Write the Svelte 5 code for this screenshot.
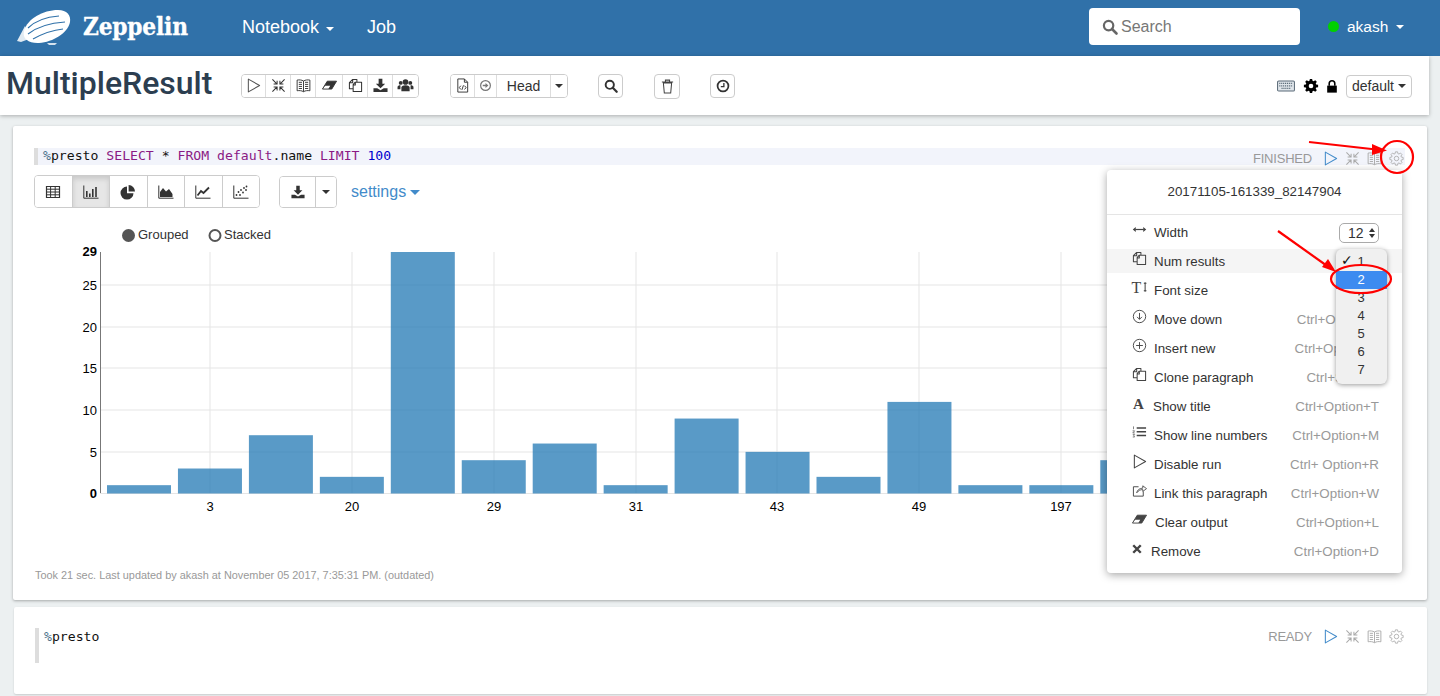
<script>
  function gearPath(c, R, r, n) {
    let d = '';
    const s = (Math.PI * 2) / n;
    for (let i = 0; i < n; i++) {
      const a = i * s;
      const pts = [
        [r, a - s * 0.36], [R, a - s * 0.2], [R, a + s * 0.2], [r, a + s * 0.36]
      ];
      pts.forEach(([q, t], j) => {
        d += (i === 0 && j === 0 ? 'M' : 'L') + (c + q * Math.cos(t)).toFixed(2) + ' ' + (c + q * Math.sin(t)).toFixed(2) + ' ';
      });
    }
    return d + 'Z';
  }
  const gear8 = gearPath(8, 7.2, 5.4, 8);

  const values = [1, 3, 7, 2, 29, 4, 6, 1, 9, 5, 2, 11, 1, 1, 4];
  const y0 = 493.5;
  const unit = 241.5 / 29;
  const bars = values.map((v, i) => ({ x: 107 + i * 70.95, h: v * unit }));
  const yTicks = [
    { v: 5, y: 452 }, { v: 10, y: 410 }, { v: 15, y: 368 }, { v: 20, y: 327 }, { v: 25, y: 285 }
  ];
  const xTicks = [
    { l: '3', x: 210 }, { l: '20', x: 352 }, { l: '29', x: 494 }, { l: '31', x: 636 },
    { l: '43', x: 777 }, { l: '49', x: 919 }, { l: '197', x: 1061 }
  ];
  const menu = [
    { icon: 'width', label: 'Width', key: '', cls: '' },
    { icon: 'copy', label: 'Num results', key: '', cls: 'hover' },
    { icon: 'font', label: 'Font size', key: '', cls: '' },
    { icon: 'down', label: 'Move down', key: 'Ctrl+Option+J', cls: '' },
    { icon: 'plus', label: 'Insert new', key: 'Ctrl+Option+B', cls: '' },
    { icon: 'copy', label: 'Clone paragraph', key: 'Ctrl+Shift+C', cls: '' },
    { icon: 'title', label: 'Show title', key: 'Ctrl+Option+T', cls: 'tight' },
    { icon: 'list', label: 'Show line numbers', key: 'Ctrl+Option+M', cls: '' },
    { icon: 'play', label: 'Disable run', key: 'Ctrl+ Option+R', cls: '' },
    { icon: 'link', label: 'Link this paragraph', key: 'Ctrl+Option+W', cls: '' },
    { icon: 'eraser', label: 'Clear output', key: 'Ctrl+Option+L', cls: 'wide' },
    { icon: 'remove', label: 'Remove', key: 'Ctrl+Option+D', cls: 'tighter' }
  ];
  const tools1 = ['play', 'collapse', 'book', 'eraser', 'copy', 'save', 'users'];
  const charts = ['table', 'bars', 'pie', 'area', 'line', 'scatter'];
  const options = ['1', '2', '3', '4', '5', '6', '7'];
</script>

{#snippet ic(name)}
  <svg class="ic" viewBox="0 0 16 16" aria-hidden="true">
    {#if name === 'play'}
      <path d="M2.5 1.2 14.5 8 2.5 14.8Z" fill="none" stroke="currentColor" stroke-width="1.1" stroke-linejoin="round" />
    {:else if name === 'collapse'}
      <path d="M1.5 1.5 6.2 6.2M6.5 2.8V6.5H2.8M14.5 1.5 9.8 6.2M9.5 2.8V6.5H13.2M1.5 14.5 6.2 9.8M6.5 13.2V9.5H2.8M14.5 14.5 9.8 9.8M9.5 13.2V9.5H13.2" fill="none" stroke="currentColor" stroke-width="1.1" />
    {:else if name === 'book'}
      <path d="M8 3.2C6 2 3.5 1.8 1.2 2.2V13.6C3.5 13.2 6 13.4 8 14.6 10 13.4 12.5 13.2 14.8 13.6V2.2C12.5 1.8 10 2 8 3.2ZM8 3.2V14.6M3 4.6H6.4M3 6.8H6.4M3 9H6.4M3 11.2H6.4M9.6 4.6H13M9.6 6.8H13M9.6 9H13M9.6 11.2H13" fill="none" stroke="currentColor" stroke-width="1" />
    {:else if name === 'eraser'}
      <path d="M5.6 3.4H15.5L10.4 11.8H.5Z" fill="currentColor" />
      <path d="M1.6 10.2 3.2 8.2H8.8L7.4 10.6 6.8 11.8H.8Z" fill="#fff" />
      <path d="M5.6 3.4H15.5L10.4 11.8H.5Z" fill="none" stroke="currentColor" stroke-width="1" />
    {:else if name === 'copy'}
      <path d="M9.5 4V1.5H5L1.5 5V11.5H5.5M5 1.5V5H1.5M11 4.5H7.5L5.5 7V14.5H14.5V4.5ZM7.8 4.8V7.4H5.6" fill="none" stroke="currentColor" stroke-width="1.1" stroke-linejoin="round" />
    {:else if name === 'save'}
      <path d="M6 .8H10V6H13L8 11 3 6H6ZM.5 11H4.5L8 13 11.5 11H15.5V15H.5Z" fill="currentColor" />
    {:else if name === 'users'}
      <g fill="currentColor"><circle cx="8" cy="4.2" r="3" /><path d="M3.6 14V10.2C3.6 8.6 5 7.6 8 7.6S12.4 8.6 12.4 10.2V14Z" /><circle cx="2.9" cy="5.2" r="2.1" /><circle cx="13.1" cy="5.2" r="2.1" /><path d="M-.5 12V9.6C-.5 8.4.8 7.7 2.6 7.7L2.6 12ZM16.5 12V9.6C16.5 8.4 15.2 7.7 13.4 7.7L13.4 12Z" /></g>
    {:else if name === 'file'}
      <path d="M3 1H10L13.5 4.5V15H3ZM10 1V4.5H13.5" fill="none" stroke="currentColor" stroke-width="1" />
      <path d="M6.2 8.2 4.6 10.2 6.2 12.2M10.2 8.2 11.8 10.2 10.2 12.2M9 7.8 7.4 12.6" fill="none" stroke="currentColor" stroke-width="1" />
    {:else if name === 'circle-arrow'}
      <circle cx="8" cy="8" r="6" fill="none" stroke="currentColor" stroke-width="1.5" />
      <path d="M4.6 7.2H8V5L11.6 8 8 11V8.8H4.6Z" fill="currentColor" />
    {:else if name === 'search'}
      <circle cx="6.6" cy="6.6" r="4.7" fill="none" stroke="currentColor" stroke-width="2.2" />
      <path d="M10 10 14.5 14.5" stroke="currentColor" stroke-width="2.6" stroke-linecap="round" />
    {:else if name === 'trash'}
      <path d="M3.6 4.2H12.4L11.4 15H4.6ZM2 3.2H14M5.8 3V1.2H10.2V3" fill="none" stroke="currentColor" stroke-width="1.1" />
    {:else if name === 'clock'}
      <circle cx="8" cy="8" r="6.2" fill="none" stroke="currentColor" stroke-width="2" />
      <path d="M9 4.5V8.8H5.5" fill="none" stroke="currentColor" stroke-width="1.5" />
    {:else if name === 'keyboard'}
      <rect x=".5" y="3.5" width="15" height="9" rx="1" fill="#dfe5ea" stroke="#5b6b78" stroke-width=".9" />
      <path d="M2 5.6H14M2 7.8H14M4 10.2H12" stroke="#5b6b78" stroke-width="1.1" stroke-dasharray="1 .7" />
    {:else if name === 'gear-solid'}
      <path d={gear8} fill="currentColor" />
      <circle cx="8" cy="8" r="2.3" fill="#fff" />
    {:else if name === 'gear'}
      <path d={gear8} fill="none" stroke="currentColor" stroke-width=".9" stroke-linejoin="round" />
      <circle cx="8" cy="8" r="2.4" fill="none" stroke="currentColor" stroke-width=".9" />
    {:else if name === 'lock'}
      <path d="M2.5 7H13.5V15H2.5Z" fill="currentColor" />
      <path d="M4.8 7V4.6C4.8 2.6 6 1.5 8 1.5S11.2 2.6 11.2 4.6V7" fill="none" stroke="currentColor" stroke-width="1.8" />
    {:else if name === 'table'}
      <path d="M1.5 2.5H14.5V13.5H1.5Z" fill="none" stroke="currentColor" stroke-width="1.2" />
      <path d="M1.5 5.2H14.5M1.5 8H14.5M1.5 10.8H14.5M5.6 2.5V13.5M10.2 2.5V13.5" stroke="currentColor" stroke-width="1" />
    {:else if name === 'bars'}
      <path d="M.8 1.5V14.2H15.5" fill="none" stroke="currentColor" stroke-width="1" />
      <path d="M3 7H4.6V13H3ZM6 9.5H7.6V13H6ZM9 5H10.6V13H9ZM12.2 3H13.8V13H12.2Z" fill="currentColor" />
    {:else if name === 'pie'}
      <path d="M7 2.6A6.5 6.5 0 1 0 13.5 9.2H7Z" fill="currentColor" />
      <path d="M8.6 1A6.6 6.6 0 0 1 15 7.6H8.6Z" fill="currentColor" />
    {:else if name === 'area'}
      <path d="M.8 1.5V14.2H15.5" fill="none" stroke="currentColor" stroke-width="1" />
      <path d="M2 13V8L5 4 8 7.5 11 5 14.5 10V13Z" fill="currentColor" />
    {:else if name === 'line'}
      <path d="M.8 1.5V14.2H15.5" fill="none" stroke="currentColor" stroke-width="1" />
      <path d="M2.5 11.5 6 7 8.5 9 14 3.5" fill="none" stroke="currentColor" stroke-width="1.8" />
    {:else if name === 'scatter'}
      <path d="M.8 1.5V14.2H15.5" fill="none" stroke="currentColor" stroke-width="1" />
      <g fill="currentColor"><circle cx="3.5" cy="11" r=".9" /><circle cx="5.5" cy="8" r=".9" /><circle cx="7" cy="11" r=".9" /><circle cx="8" cy="6" r=".9" /><circle cx="10" cy="8.5" r=".9" /><circle cx="11" cy="4" r=".9" /><circle cx="13" cy="6" r=".9" /><circle cx="13.5" cy="2.5" r=".9" /></g>
    {:else if name === 'width'}
      <path d="M3.5 8H12.5" stroke="currentColor" stroke-width="1.3" />
      <path d="M.8 8 4 5.4V10.6ZM15.2 8 12 5.4V10.6Z" fill="currentColor" />
    {:else if name === 'font'}
      <text x="-.5" y="13.5" class="serif">T</text>
      <path d="M14 2.5V12.5M12.6 3.5H15.4M12.6 11.5H15.4" stroke="currentColor" stroke-width="1.1" fill="none" />
    {:else if name === 'down'}
      <circle cx="8" cy="8" r="6.6" fill="none" stroke="currentColor" stroke-width="1" />
      <path d="M8 4.2V11M5.4 8.4 8 11 10.6 8.4" fill="none" stroke="currentColor" stroke-width="1" />
    {:else if name === 'plus'}
      <circle cx="8" cy="8" r="6.6" fill="none" stroke="currentColor" stroke-width="1" />
      <path d="M8 4.4V11.6M4.4 8H11.6" fill="none" stroke="currentColor" stroke-width="1" />
    {:else if name === 'title'}
      <text x="1" y="13.5" class="serif bold">A</text>
    {:else if name === 'list'}
      <path d="M5 3.2H15M5 7.2H15M5 11.2H15" stroke="currentColor" stroke-width="1.8" />
      <path d="M1.6 1.5V4.5M.6 6.2H2.8L.8 8.5H3M.8 10.2H2.8L1.8 11.5 2.8 12.8H.8" stroke="currentColor" stroke-width=".7" fill="none" />
    {:else if name === 'link'}
      <path d="M7 4H1.5V14H12V9" fill="none" stroke="currentColor" stroke-width="1" />
      <path d="M5 10.5C5.5 7.5 8 5.5 11.5 5.5V3L15.5 6 11.5 9V7C9 7 6.8 8 5 10.5Z" fill="none" stroke="currentColor" stroke-width=".9" />
    {:else if name === 'remove'}
      <path d="M3 3 13 13M13 3 3 13" stroke="currentColor" stroke-width="3.2" />
    {/if}
  </svg>
{/snippet}

<div class="page">
  <header class="nav">
    <div class="brand">
      <svg class="logo" viewBox="0 0 58 36" aria-hidden="true">
        <path d="M2 32 10 17 13 24 14 30 6 33Z" fill="#fff" opacity=".85" />
        <path d="M9 22C12 10 28 1 43 1 52 1 56 6 55 13 53 24 38 33 24 34 14 34.500 7 30 9 22Z" fill="#fff" />
        <path d="M13 19C20 12 31 8 44 7M13 25C22 18 34 14 50 13M18 30C27 25 38 21 48 20" fill="none" stroke="#3071a9" stroke-width="1.100" />
        <path d="M32 34H42L40 36H34Z" fill="#d5e2ee" />
      </svg>
      <span class="brand-name">Zeppelin</span>
    </div>
    <nav class="links">
      <span class="link">Notebook<i class="caret"></i></span>
      <span class="link">Job</span>
    </nav>
    <div class="nav-right">
      <div class="search">
        {@render ic('search')}
        <span>Search</span>
      </div>
      <div class="user"><i class="dot"></i><span>akash</span><i class="caret small"></i></div>
    </div>
  </header>

  <section class="actionbar">
    <h1>MultipleResult</h1>
    <div class="group g1">
      {#each tools1 as t}<button class="tb">{@render ic(t)}</button>{/each}
    </div>
    <div class="group g2">
      <button class="tb b-file">{@render ic('file')}</button>
      <button class="tb b-arrow">{@render ic('circle-arrow')}</button>
      <button class="tb b-head">Head</button>
      <button class="tb b-caret"><i class="caret dark"></i></button>
    </div>
    <button class="solo s-search">{@render ic('search')}</button>
    <button class="solo s-trash">{@render ic('trash')}</button>
    <button class="solo s-clock">{@render ic('clock')}</button>
    <div class="bar-right">
      <span class="kb">{@render ic('keyboard')}</span>
      <span class="cog">{@render ic('gear-solid')}</span>
      <span class="lock">{@render ic('lock')}</span>
      <button class="default">default<i class="caret dark"></i></button>
    </div>
  </section>

  <section class="para first">
    <div class="editor">
      <code><span class="pct">%</span>presto <b class="kw">SELECT</b> * <b class="kw">FROM</b> <b class="kw">default</b>.name <b class="kw">LIMIT</b> <b class="num">100</b></code>
    </div>
    <div class="status">
      <span class="state">FINISHED</span>
      <span class="st-play">{@render ic('play')}</span>
      <span class="st-i">{@render ic('collapse')}</span>
      <span class="st-i">{@render ic('book')}</span>
      <span class="st-i">{@render ic('gear')}</span>
    </div>

    <div class="chart-tools">
      <div class="group chart-group">
        {#each charts as c, i}<button class="cb" class:active={i === 1}>{@render ic(c)}</button>{/each}
      </div>
      <div class="group dl-group">
        <button class="dl">{@render ic('save')}</button>
        <button class="dl-caret"><i class="caret dark"></i></button>
      </div>
      <span class="settings">settings<i class="caret blue"></i></span>
    </div>

    <svg class="chart" viewBox="13 222 1414 308">
      <circle cx="128.500" cy="235.500" r="6.500" fill="#555" />
      <text x="138" y="239" class="legend">Grouped</text>
      <circle cx="215" cy="235.500" r="5.500" fill="#fff" stroke="#555" stroke-width="2" />
      <text x="224" y="239" class="legend">Stacked</text>

      {#each yTicks as t}
        <line x1="100" x2="1390" y1={t.y} y2={t.y} class="grid" />
        <text x="97" y={t.y + 5} class="tick end">{t.v}</text>
      {/each}
      {#each xTicks as t}
        <line x1={t.x} x2={t.x} y1="252" y2="493" class="grid" />
        <text x={t.x} y="511" class="tick mid">{t.l}</text>
      {/each}
      <line x1="100" x2="1390" y1="493.500" y2="493.500" class="grid" />
      <line x1="100.500" x2="100.500" y1="252" y2="493" stroke="#777" />
      <text x="97" y="256" class="tick end strong">29</text>
      <text x="97" y="498" class="tick end strong">0</text>
      {#each bars as b}
        <rect x={b.x} y={y0 - b.h} width="64" height={b.h} class="bar" />
      {/each}
    </svg>

    <p class="took">Took 21 sec. Last updated by akash at November 05 2017, 7:35:31 PM. (outdated)</p>

    <div class="menu">
      <div class="menu-head">20171105-161339_82147904</div>
      <ul>
        {#each menu as m}
          <li class={m.cls}>
            <span class="m-label">
              <span class="m-icon">{@render ic(m.icon)}</span>{m.label}
            </span>
            {#if m.key}<span class="m-key">{m.key}</span>{/if}
          </li>
        {/each}
      </ul>
      <div class="select">12<span class="updown"><i class="up"></i><i class="down-tri"></i></span></div>
      <div class="native">
        {#each options as o, i}
          <div class="opt" class:sel={i === 1}>{#if i === 0}<span class="check">✓</span>{/if}{o}</div>
        {/each}
      </div>
    </div>
  </section>

  <section class="para second">
    <div class="editor plain">
      <code><span class="pct">%</span>presto</code>
    </div>
    <div class="status ready">
      <span class="state">READY</span>
      <span class="st-play">{@render ic('play')}</span>
      <span class="st-i">{@render ic('collapse')}</span>
      <span class="st-i">{@render ic('book')}</span>
      <span class="st-i">{@render ic('gear')}</span>
    </div>
  </section>

  <svg class="marks" viewBox="0 0 1440 696" aria-hidden="true">
    <g fill="none" stroke="#f00" stroke-width="2.200">
      <circle cx="1397" cy="157" r="16" />
      <ellipse cx="1361" cy="279" rx="30" ry="14" />
      <path d="M1309 142 1376 149.500" />
      <path d="M1278 231 1330 268" />
    </g>
    <path d="M1387 150.500 1372 144 1372 155Z" fill="#f00" />
    <path d="M1336 272 1322 267 1328 259Z" fill="#f00" />
  </svg>
</div>

<style>
  :global(body) {
    margin: 0;
    background: #ecf0f1;
    font-family: "Liberation Sans", Arial, sans-serif;
    color: #333;
  }
  .page {
    position: relative;
    width: 1440px;
    height: 696px;
    overflow: hidden;
    background: #ecf0f1;
  }
  .ic { width: 16px; height: 16px; display: block; overflow: visible; }
  button { font: inherit; color: inherit; padding: 0; background: #fff; margin: 0; }
  i { display: inline-block; }
  .serif { font-family: "Liberation Serif", serif; font-size: 17px; fill: currentColor; }
  .serif.bold { font-weight: 700; font-size: 16px; }

  .caret {
    width: 0; height: 0;
    border-left: 4.5px solid transparent;
    border-right: 4.5px solid transparent;
    border-top: 4.5px solid #fff;
    margin-left: 7px;
    vertical-align: 2px;
  }
  .caret.small { margin-left: 8px; }
  .caret.dark { border-top-color: #333; }
  .caret.blue { border-top-color: #428bca; margin-left: 4px; border-left-width: 5px; border-right-width: 5px; border-top-width: 5px; }

  /* nav */
  .nav {
    height: 56px;
    background: #3071a9;
    display: flex;
    align-items: center;
    padding-left: 15px;
    color: #fff;
    box-sizing: border-box;
  }
  .brand { display: flex; align-items: center; width: 227px; }
  .logo { width: 58px; height: 36px; flex: none; margin-top: -3px; }
  .brand-name {
    font-family: "DejaVu Serif Condensed", "DejaVu Serif", serif;
    font-weight: 700;
    font-size: 24.200px;
    margin-left: 10px;
    margin-top: -3px;
    letter-spacing: -.2px;
    -webkit-text-stroke: .3px #fff;
  }
  .links { display: flex; gap: 33px; font-size: 18px; }
  .link { display: block; margin-top: -1px; }
  .nav-right { margin-left: auto; display: flex; align-items: center; margin-top: -3px; }
  .search {
    width: 211px; height: 37px;
    box-sizing: border-box;
    background: #fff;
    border-radius: 4px;
    display: flex;
    align-items: center;
    gap: 3px;
    padding-left: 13px;
    color: #777;
    font-size: 16px;
  }
  .search .ic { width: 16px; height: 16px; color: #666; }
  .user { display: flex; align-items: center; margin-left: 28px; width: 112px; font-size: 15.500px; }
  .dot { width: 11px; height: 11px; border-radius: 50%; background: #00d100; margin-right: 8px; }

  /* action bar */
  .actionbar {
    width: 1429px;
    height: 59px;
    background: #fff;
    box-shadow: 0 1px 4px rgba(0, 0, 0, .28);
    display: flex;
    align-items: center;
    box-sizing: border-box;
    padding-left: 6px;
    position: relative;
  }
  h1 {
    margin: -5px 29px 0 0;
    width: 206px;
    font-family: Roboto, sans-serif;
    font-weight: 500;
    font-size: 32px;
    line-height: 56px;
    color: #2c3e50;
    white-space: nowrap;
  }
  .group {
    display: flex;
    border: 1px solid #ccc;
    border-radius: 4px;
    overflow: hidden;
    background: #fff;
    box-sizing: border-box;
  }
  .g1 { height: 24px; width: 178px; }
  .tb {
    border: 0;
    border-right: 1px solid #ddd;
    width: 25px;
    display: flex;
    align-items: center;
    justify-content: center;
    color: #333;
    box-sizing: border-box;
    flex: none;
  }
  .tb:last-child { border-right: 0; }
  .tb .ic { width: 15px; height: 15px; }
  .g1 .tb:first-child { width: 24px; }
  .g1 .tb:nth-child(1) { color: #555; }
  .g1 .tb:nth-child(4) { width: 27px; }
  .g2 { height: 24px; margin: 0 0 0 31px; width: 118px; }
  .b-file { width: 24px; }
  .b-arrow { width: 22px; color: #777; }
  .b-arrow .ic { width: 13px; height: 13px; }
  .b-head { width: 54px; font-size: 14px; }
  .b-caret { flex: 1; }
  .b-caret .caret { margin: 0; }
  .solo {
    border: 1px solid #ccc;
    border-radius: 4px;
    height: 24px;
    width: 25px;
    box-sizing: border-box;
    display: flex;
    align-items: center;
    justify-content: center;
    flex: none;
  }
  .solo .ic { width: 14px; height: 14px; }
  .s-search { margin: 0 0 0 30px; }
  .s-trash { margin: 2px 0 0 31px; width: 26px; height: 25px; }
  .s-trash .ic { width: 15px; height: 15px; color: #444; }
  .s-clock { margin: 0 0 0 30px; }
  .bar-right { margin-left: auto; display: flex; align-items: center; padding-right: 17px; margin-top: 1px; }
  .kb .ic { width: 18px; height: 18px; }
  .cog { margin-left: 8px; color: #000; }
  .lock { margin-left: 6px; color: #000; }
  .lock .ic { width: 14px; height: 15px; }
  .default {
    margin-left: 7px;
    width: 66px; height: 23px;
    border: 1px solid #ccc;
    border-radius: 4px;
    font-size: 14px;
    box-sizing: border-box;
    display: flex; align-items: center; justify-content: center;
  }
  .default .caret { margin-left: 4px; }

  /* paragraphs */
  .para {
    background: #fff;
    margin-left: 13px;
    width: 1414px;
    border-radius: 2px;
    box-shadow: 0 1px 3px rgba(0, 0, 0, .3);
    position: relative;
    box-sizing: border-box;
  }
  .first { margin-top: 11px; height: 474px; padding: 22px 21px 0; }
  .second { margin-top: 7px; height: 87px; padding: 21px 21px 0; margin-left: 14px; width: 1413px; box-shadow: 0 1px 2px rgba(0, 0, 0, .15); }
  .editor {
    height: 17px;
    width: 1371px;
    box-sizing: border-box;
    border-left: 4px solid #ddd;
    background: #f2f4fb;
    padding-left: 5px;
    line-height: 14px;
  }
  .editor.plain { background: #fff; height: 35px; width: 1370px; line-height: 16px; }
  code { font-family: "DejaVu Sans Mono", monospace; font-size: 13.150px; color: #111; white-space: pre; }
  .pct { color: #4a6f8a; }
  .kw { color: #8a1a84; font-weight: 400; }
  .num { color: #0000cd; font-weight: 400; }

  .status {
    position: absolute;
    right: 23px;
    top: 22px;
    display: flex;
    align-items: center;
    color: #999;
    height: 20px;
  }
  .second .status { top: 19px; }
  .state { font-size: 13px; margin-right: 11px; color: #999; letter-spacing: -.2px; }
  .st-play { color: #428bca; }
  .st-play .ic { width: 15px; height: 15px; }
  .st-i { margin-left: 7px; color: #aaa; }
  .st-i .ic { width: 15px; height: 15px; }

  .chart-tools { display: flex; align-items: center; margin-top: 10px; height: 33px; }
  .chart-group { height: 33px; width: 226px; }
  .cb {
    border: 0;
    border-right: 1px solid #ccc;
    width: 37.500px;
    flex: none;
    box-sizing: border-box;
    display: flex;
    align-items: center;
    justify-content: center;
    color: #333;
  }
  .cb:last-child { border-right: 0; }
  .cb.active { background: #e6e6e6; box-shadow: inset 0 3px 5px rgba(0, 0, 0, .125); }
  .dl-group { height: 32px; width: 58px; margin-left: 19px; }
  .dl { width: 36px; border: 0; border-right: 1px solid #ccc; display: flex; align-items: center; justify-content: center; color: #333; }
  .dl .ic { width: 14px; height: 14px; }
  .dl-caret { flex: 1; border: 0; display: flex; align-items: center; justify-content: center; }
  .dl-caret .caret { margin: 0; }
  .settings { margin-left: 14px; color: #428bca; font-size: 16px; }

  .chart { display: block; width: 1414px; height: 308px; position: absolute; left: 0; top: 96px; }
  .legend { font-size: 13px; fill: #333; }
  .grid { stroke: #e5e5e5; stroke-width: 1; }
  .tick { font-size: 13px; fill: #000; }
  .end { text-anchor: end; }
  .mid { text-anchor: middle; }
  .strong { font-weight: 700; }
  .bar { fill: #1f77b4; fill-opacity: .74; }
  .took {
    position: absolute;
    left: 22px;
    top: 443px;
    margin: 0;
    font-size: 10.900px;
    color: #999;
    white-space: nowrap;
  }

  /* menu */
  .menu {
    position: absolute;
    left: 1094px;
    top: 44px;
    width: 295px;
    height: 403px;
    background: #fff;
    border-radius: 4px;
    box-shadow: 0 2px 8px rgba(0, 0, 0, .35);
    font-size: 13.330px;
    color: #333;
  }
  .menu-head {
    height: 44px;
    line-height: 44px;
    text-align: center;
    border-bottom: 1px solid #e5e5e5;
    font-size: 13.330px;
    box-sizing: content-box;
  }
  ul { list-style: none; margin: 0; padding: 5px 0 0; }
  li {
    height: 24px;
    margin-bottom: 5px;
    display: flex;
    align-items: center;
    justify-content: space-between;
    padding: 0 23px 0 25px;
    white-space: nowrap;
  }
  li.hover { background: #f5f5f5; }
  .m-label { display: flex; align-items: center; }
  .m-icon { width: 22px; flex: none; margin-top: -5px; color: #444; }
  .m-icon .ic { width: 15px; height: 15px; }
  li.tight .m-icon { width: 21px; }
  li.wide .m-icon { width: 23px; }
  li.tighter .m-icon { width: 19px; }
  li.tighter .ic { width: 12px; height: 12px; margin-left: -1px; }
  .m-key { color: #999; }

  .select {
    position: absolute;
    left: 232px;
    top: 53px;
    width: 40px;
    height: 20px;
    box-sizing: border-box;
    border: 1px solid #aaa;
    border-radius: 5px;
    display: flex;
    align-items: center;
    padding-left: 8px;
    font-size: 14px;
    gap: 5px;
  }
  .updown { display: flex; flex-direction: column; gap: 2px; }
  .up, .down-tri { width: 0; height: 0; border-left: 3px solid transparent; border-right: 3px solid transparent; display: block; }
  .up { border-bottom: 4px solid #333; }
  .down-tri { border-top: 4px solid #333; }
  .native {
    position: absolute;
    left: 229px;
    top: 79px;
    width: 51px;
    height: 135px;
    box-sizing: border-box;
    padding-top: 4px;
    border-radius: 6px;
    background: #f0f0f0;
    box-shadow: 0 1px 5px rgba(0, 0, 0, .4);
    overflow: hidden;
  }
  .opt {
    height: 18px;
    line-height: 18px;
    text-align: center;
    font-size: 13px;
    color: #333;
    position: relative;
    padding-right: 1px;
  }
  .opt.sel { background: #3d8bf0; color: #fff; }
  .check { position: absolute; left: 5px; top: -2px; font-size: 14px; font-family: "DejaVu Sans", sans-serif; color: #111; }

  .marks { position: absolute; left: 0; top: 0; width: 1440px; height: 696px; pointer-events: none; }
</style>
